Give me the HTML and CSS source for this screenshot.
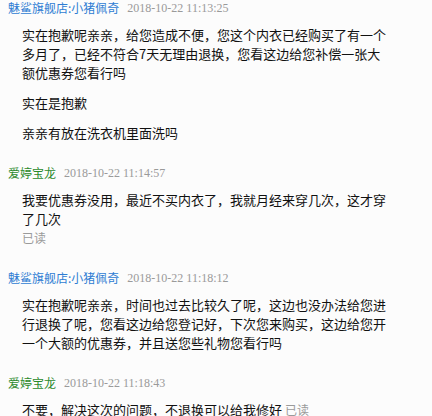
FILE: index.html
```html
<!DOCTYPE html>
<html lang="zh-CN">
<head>
<meta charset="utf-8">
<link rel="stylesheet" href="styles.css">
</head>
<body>
<div class="chat">
  <div class="group">
    <div class="head"><span class="name seller">魅鲨旗舰店:小猪佩奇</span><span class="time">2018-10-22 11:13:25</span></div>
    <p class="msg">实在抱歉呢亲亲，给您造成不便，您这个内衣已经购买了有一个<br>多月了，已经不符合7天无理由退换，您看这边给您补偿一张大<br>额优惠券您看行吗</p>
    <p class="msg">实在是抱歉</p>
    <p class="msg">亲亲有放在洗衣机里面洗吗</p>
  </div>
  <div class="group">
    <div class="head"><span class="name buyer">爱婷宝龙</span><span class="time">2018-10-22 11:14:57</span></div>
    <p class="msg">我要优惠券没用，最近不买内衣了，我就月经来穿几次，这才穿<br>了几次</p>
    <div class="read">已读</div>
  </div>
  <div class="group">
    <div class="head"><span class="name seller">魅鲨旗舰店:小猪佩奇</span><span class="time">2018-10-22 11:18:12</span></div>
    <p class="msg">实在抱歉呢亲亲，时间也过去比较久了呢，这边也没办法给您进<br>行退换了呢，您看这边给您登记好，下次您来购买，这边给您开<br>一个大额的优惠券，并且送您些礼物您看行吗</p>
  </div>
  <div class="group">
    <div class="head"><span class="name buyer">爱婷宝龙</span><span class="time">2018-10-22 11:18:43</span></div>
    <p class="msg">不要，解决这次的问题，不退换可以给我修好 <span class="read-inline">已读</span></p>
  </div>
</div>
</body>
</html>
```
FILE: styles.css
```css
html, body {
  margin: 0;
  padding: 0;
  background: #fcfcfc;
}
.chat {
  padding: 0 0 0 8px;
  font-family: "Noto Sans CJK SC", "Noto Sans", sans-serif;
}
.group {
  margin-top: 23px;
}
.group:first-child {
  margin-top: 0;
}
.head {
  height: 16px;
  line-height: 16px;
  display: flex;
  align-items: center;
  gap: 8px;
  white-space: nowrap;
}
.name {
  font-size: 12px;
}
.seller {
  color: #2f7dd3;
}
.buyer {
  color: #2b8a2b;
}
.time {
  font-family: "Liberation Serif", serif;
  font-size: 12px;
  color: #9a9a9a;
}
.msg {
  margin: 11px 0 0 14px;
  font-size: 13px;
  line-height: 19px;
  color: #111;
  white-space: nowrap;
}
.head + .msg {
  margin-top: 9px;
}
.read {
  margin-left: 14px;
  font-size: 12px;
  line-height: 19px;
  color: #9a9a9a;
}
.read-inline {
  font-size: 12px;
  color: #9a9a9a;
}
```
